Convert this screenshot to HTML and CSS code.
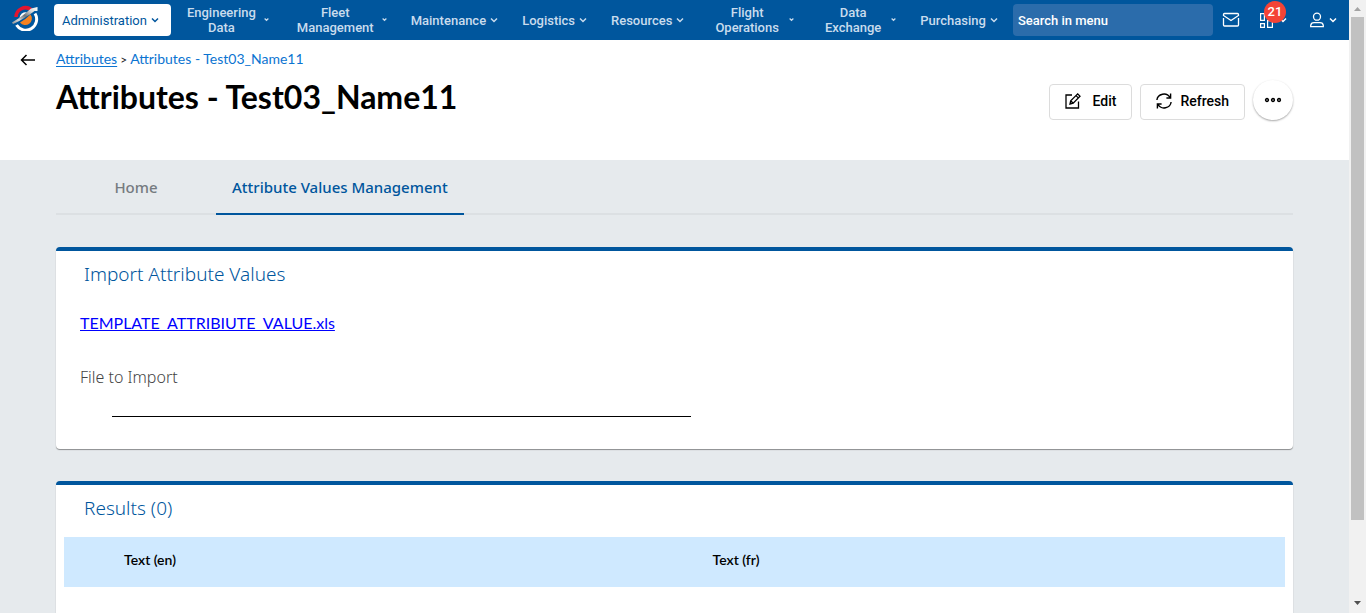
FILE: index.html
```html
<!DOCTYPE html>
<html lang="en">
<head>
<meta charset="utf-8">
<title>Attributes - Test03_Name11</title>
<link rel="stylesheet" href="styles.css">
</head>
<body>
<div class="app">
  <div class="page">
    <header class="topbar">
      <a class="logo" href="#" aria-label="Start page">
        <svg width="28" height="26" viewBox="0 0 28 26">
          <defs>
            <linearGradient id="wing" x1="0" y1="1" x2="1" y2="0">
              <stop offset="0" stop-color="#8d8d8d"/><stop offset=".25" stop-color="#d6d6d6"/>
              <stop offset=".5" stop-color="#6f7478"/><stop offset=".75" stop-color="#d8d8d8"/>
              <stop offset="1" stop-color="#ffffff"/>
            </linearGradient>
          </defs>
          <path d="M5 12A9.500 9.500 0 0 1 20 4.500" fill="none" stroke="#e4152f" stroke-width="3.500"/>
          <path d="M24 8.500A10.500 10.500 0 0 1 5.500 20" fill="none" stroke="#fff" stroke-width="3"/>
          <path d="M9 17.500Q15 14 19.500 9.500A6 6 0 0 1 9 17.500Z" fill="#f58220"/>
          <path d="M8.500 13A6 6 0 0 1 16 7.500L10 12.500Z" fill="#fff"/>
          <path d="M1 17.500C8 13.500 15 8 20 3.500L26.500 2L26.500 6L23.500 6C17 11 10 15.500 2 19Z" fill="url(#wing)"/>
        </svg>
      </a>
      <nav class="menu" aria-label="Main menu">
        <button class="item active">Administration<svg class="chev" viewBox="0 0 8 8"><path d="M1 2.500L4 5.500L7 2.500"/></svg></button>
        <button class="item wide"><span>Engineering<br>Data</span><svg class="chev small" viewBox="0 0 8 8"><path d="M1 2.500L4 5.500L7 2.500"/></svg></button>
        <button class="item wide"><span>Fleet<br>Management</span><svg class="chev small" viewBox="0 0 8 8"><path d="M1 2.500L4 5.500L7 2.500"/></svg></button>
        <button class="item">Maintenance<svg class="chev" viewBox="0 0 8 8"><path d="M1 2.500L4 5.500L7 2.500"/></svg></button>
        <button class="item">Logistics<svg class="chev" viewBox="0 0 8 8"><path d="M1 2.500L4 5.500L7 2.500"/></svg></button>
        <button class="item">Resources<svg class="chev" viewBox="0 0 8 8"><path d="M1 2.500L4 5.500L7 2.500"/></svg></button>
        <button class="item wider"><span>Flight<br>Operations</span><svg class="chev small" viewBox="0 0 8 8"><path d="M1 2.500L4 5.500L7 2.500"/></svg></button>
        <button class="item wider"><span>Data<br>Exchange</span><svg class="chev small" viewBox="0 0 8 8"><path d="M1 2.500L4 5.500L7 2.500"/></svg></button>
        <button class="item">Purchasing<svg class="chev" viewBox="0 0 8 8"><path d="M1 2.500L4 5.500L7 2.500"/></svg></button>
      </nav>
      <input class="search" type="text" placeholder="Search in menu" aria-label="Search in menu">
      <div class="tools">
        <button class="tool" aria-label="Messages">
          <svg width="18" height="16" viewBox="0 0 18 16" fill="none" stroke="#fff" stroke-width="1.300"><path d="M1.500 3.500V2.500Q1.500 1.500 2.500 1.500H15.500Q16.500 1.500 16.500 2.500V3.500L9 8.500ZM1.500 6V13Q1.500 14 2.500 14H15.500Q16.500 14 16.500 13V6"/></svg>
        </button>
        <button class="tool apps" aria-label="Applications, 21 notifications">
          <svg width="16" height="16" viewBox="0 0 16 16" fill="none" stroke="#fff" stroke-width="1.200"><path d="M1.600 1.600H5.400V8.400H1.600ZM1.600 11.600H5.400V15.400H1.600ZM8.600 1.600H14.400V5.400H8.600ZM8.600 8.600H13.400V15.400H8.600Z"/></svg>
          <svg class="chev" viewBox="0 0 8 8"><path d="M1 2.500L4 5.500L7 2.500"/></svg>
          <span class="badge">21</span>
        </button>
        <button class="tool user" aria-label="Account">
          <svg width="16" height="16" viewBox="0 0 16 16" fill="none" stroke="#fff" stroke-width="1.300"><circle cx="8" cy="4.700" r="3.500"/><path d="M1.700 14.700V13.500Q2 10.600 5 10.600H11Q14 10.600 14.300 13.500V14.700Z"/></svg>
          <svg class="chev" viewBox="0 0 8 8"><path d="M1 2.500L4 5.500L7 2.500"/></svg>
        </button>
      </div>
    </header>

    <section class="heading">
      <button class="back" aria-label="Back">
        <svg width="16" height="12" viewBox="0 0 16 12" fill="none" stroke="#000" stroke-width="1.500"><path d="M15 6H1.500M6.500 1L1.500 6L6.500 11"/></svg>
      </button>
      <div class="titles">
        <nav class="crumbs" aria-label="Breadcrumb"><a href="#">Attributes</a><span class="sep">&gt;</span><span class="here">Attributes - Test03_Name11</span></nav>
        <div class="row">
          <h1>Attributes - Test03_Name11</h1>
          <div class="actions">
            <button class="btn">
              <svg width="16" height="16" viewBox="0 0 16 16" fill="none" stroke="#000" stroke-width="1.300"><path d="M7 2H1V15H13.500V8.500"/><path d="M5 11L5.700 7.800L12.700 .9L15 3.200L8.200 10.200ZM11 2.600L13.300 4.900M5.700 7.800L8.200 10.200"/></svg>
              Edit
            </button>
            <button class="btn">
              <svg width="16" height="16" viewBox="0 0 16 16" fill="none" stroke="#000" stroke-width="1.400"><path d="M.9 7A7 6.600 0 0 1 14 4.500M14.600 .6V5H10.400M15.100 9A7 6.600 0 0 1 2 11.500M1.400 15.400V11H5.600"/></svg>
              Refresh
            </button>
            <button class="more" aria-label="More actions">
              <svg width="18" height="6" viewBox="0 0 18 6" fill="#999" stroke="#000" stroke-width="1.300"><circle cx="3" cy="3" r="1.500"/><circle cx="9" cy="3" r="1.500"/><circle cx="15" cy="3" r="1.500"/></svg>
            </button>
          </div>
        </div>
      </div>
    </section>

    <main class="content">
      <div class="tabs" role="tablist">
        <button class="tab" role="tab" aria-selected="false">Home</button>
        <button class="tab selected" role="tab" aria-selected="true">Attribute Values Management</button>
      </div>
      <section class="card import">
        <h2>Import Attribute Values</h2>
        <a class="file" href="#">TEMPLATE_ATTRIBIUTE_VALUE.xls</a>
        <label for="import-file">File to Import</label>
        <input id="import-file" class="line" type="text">
      </section>
      <section class="card results">
        <h2>Results (0)</h2>
        <table>
          <thead><tr><td class="pick"></td><th scope="col">Text (en)</th><th scope="col">Text (fr)</th></tr></thead>
        </table>
      </section>
    </main>
  </div>
  <div class="scroll" aria-hidden="true">
    <svg width="7" height="4" viewBox="0 0 7 4"><path d="M0 4L3.500 0L7 4Z" fill="#a3a3a3"/></svg>
    <div class="track"><div class="thumb"></div></div>
    <svg width="7" height="4" viewBox="0 0 7 4"><path d="M0 0L3.500 4L7 0Z" fill="#505050"/></svg>
  </div>
</div>
</body>
</html>
```
FILE: styles.css
```css
* { box-sizing: border-box; }
body { margin: 0; font-family: Lato, sans-serif; color: #000; }
button { font: inherit; color: inherit; border: 0; background: none; padding: 0; cursor: pointer; }

.app { display: grid; grid-template-columns: minmax(0, 1fr) 17px; height: 100vh; overflow: hidden; }
.page { overflow: hidden; background: #e6eaed; }

.topbar { display: flex; align-items: center; height: 40px; background: #00569d; color: #fff; font: 500 13px/15px Roboto, sans-serif; }
.logo { display: flex; margin: 0 15px 4px 11px; }
.menu { display: flex; gap: 4px; }
.item { display: flex; align-items: center; height: 32px; padding: 0 12px 0 8px; gap: 4px; border-radius: 4px; color: #c9dced; white-space: nowrap; }
.item.wide { padding-left: 12px; gap: 8px; }
.item.wider { padding-left: 15px; gap: 10px; }
.item.active { background: #fff; color: #00569d; font-weight: 400; }
.chev { width: 8px; height: 8px; fill: none; stroke: currentColor; stroke-width: 1.5; }
.chev.small { width: 5px; height: 5px; margin-bottom: 2px; stroke-width: 2; }
.search { width: 200px; height: 32px; margin-left: 3px; padding: 0 5px; border: 0; border-radius: 4px; background: #2b6cab; color: #fff; font: 500 13px/15px Roboto, sans-serif; }
.search::placeholder { color: #fff; opacity: 1; }
.tools { display: flex; flex: 1; align-items: center; padding: 0 12px 0 9px; }
.tool { display: flex; align-items: center; gap: 4px; color: #fff; }
.tool.apps { position: relative; margin-left: 19px; }
.tool.user { margin-left: auto; }
.badge { position: absolute; left: 5px; top: -11px; width: 22px; height: 22px; border-radius: 50%; background: #f44336; font: 500 13px/22px Roboto, sans-serif; text-align: center; }

.heading { display: flex; height: 120px; padding-right: 56px; background: #fff; }
.back { display: flex; width: 56px; height: 40px; padding-left: 20px; align-items: center; }
.titles { flex: 1; }
.crumbs { padding-top: 10px; font-size: 14px; line-height: 18px; color: #0b74d1; }
.crumbs a { color: inherit; text-underline-offset: 2px; }
.sep { margin: 0 3px; color: #222; font-size: 12px; }
.row { display: flex; justify-content: space-between; }
h1 { margin: 6px 0 0; font-size: 32px; line-height: 44px; font-weight: 700; }
.actions { display: flex; gap: 8px; padding-top: 11px; align-items: flex-start; }
.btn { display: flex; align-items: center; justify-content: space-between; gap: 8px; min-width: 83px; height: 36px; margin-top: 4px; padding: 0 15px 2px; border: 1px solid #dcdcdc; border-radius: 4px; background: #fff; font: 500 14px/16px Roboto, sans-serif; }
.more { display: flex; align-items: center; justify-content: center; width: 40px; height: 40px; border-radius: 50%; background: #fff; box-shadow: 0 1px 2px rgba(0, 0, 0, .35); }

.content { padding: 0 56px; }
.tabs { display: flex; height: 55px; border-bottom: 2px solid #dce0e3; }
.tab { height: 55px; padding: 0 16px; border-bottom: 2px solid transparent; font: 500 15px/20px "Noto Sans", sans-serif; color: #757b80; }
.tab:first-child { width: 160px; }
.tab.selected { border-color: #00569d; color: #00569d; }

.card { margin-top: 32px; border-top: 4px solid #00569d; border-radius: 4px; background: #fff; box-shadow: 0 1px 1px rgba(0, 0, 0, .4); }
h2 { margin: 0; color: #00569d; font: 300 19px/28px "Noto Sans", sans-serif; }
.import { display: flex; flex-direction: column; align-items: flex-start; padding: 9px 24px 32px; }
.import h2 { padding-left: 4px; }
.file { margin-top: 23px; color: #00f; font-size: 16px; line-height: 24px; }
label { margin-top: 32px; color: #444; font: 300 16px/20px "Noto Sans", sans-serif; }
.line { width: calc(50% - 16px); height: 30px; margin-left: 32px; border: 0; border-bottom: 1px solid #000; background: none; }
.results { height: 240px; padding: 9px 8px; }
.results h2 { padding-left: 20px; }
table { width: 100%; margin-top: 15px; border-collapse: collapse; table-layout: fixed; background: #cfe9ff; }
td, th { height: 50px; padding: 0 16px 6px; text-align: left; font-size: 14px; font-weight: 600; }
.pick { width: 44px; }

.scroll { display: flex; flex-direction: column; align-items: center; padding: 7px 0 8px; background: #f1f1f1; }
.track { flex: 1; width: 13px; padding: 6px 0; }
.thumb { height: 87%; background: #c1c1c1; }
```
